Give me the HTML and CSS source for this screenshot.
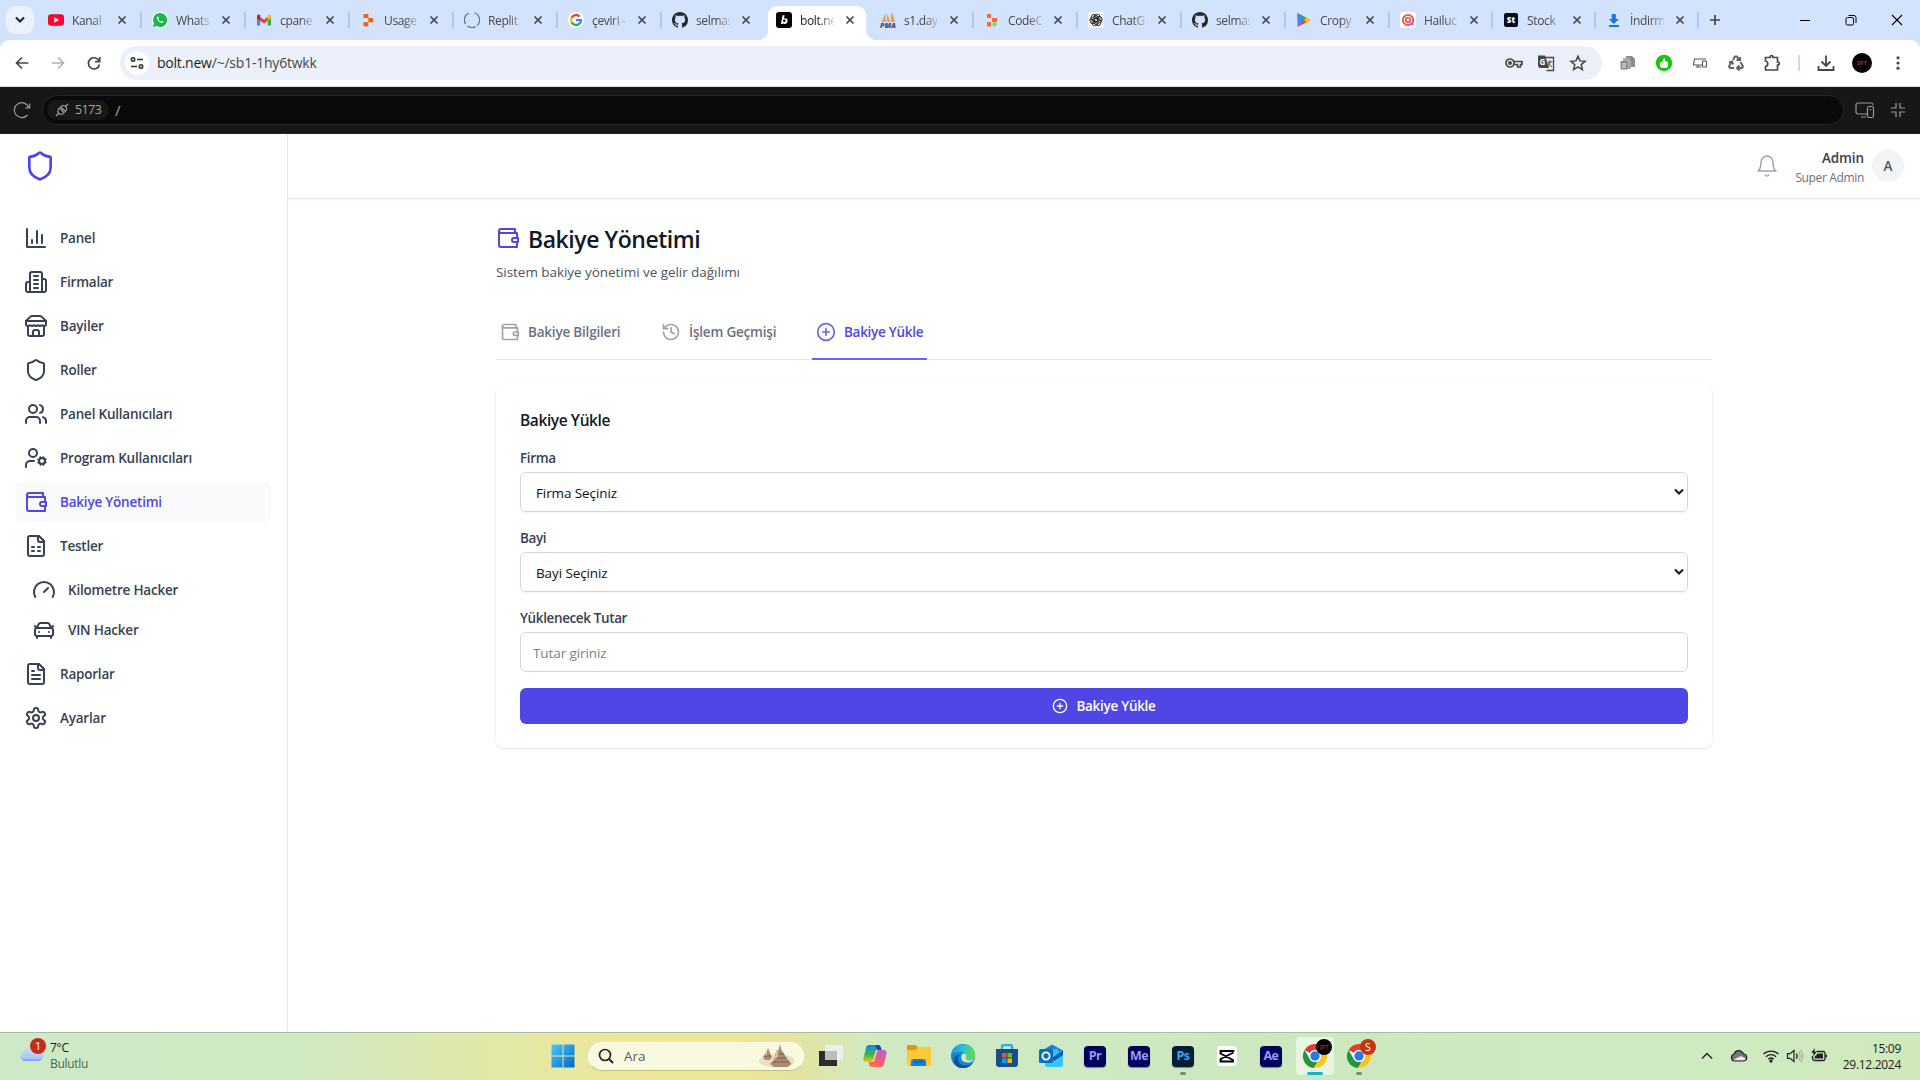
FILE: index.html
```html
<!DOCTYPE html>
<html lang="tr">
<head>
<meta charset="utf-8">
<title>Bakiye Yönetimi</title>
<link rel="stylesheet" href="styles.css">
</head>
<body>
<svg class="defs" aria-hidden="true">
  <symbol id="x" viewBox="0 0 10 10"><path d="M1.5 1.5l7 7M8.5 1.5l-7 7" stroke="#474747" stroke-width="1.7" fill="none"/></symbol>
  <symbol id="github" viewBox="0 0 16 16"><path fill="#24292f" d="M8 0C3.58 0 0 3.58 0 8c0 3.54 2.29 6.53 5.47 7.59.4.07.55-.17.55-.38 0-.19-.01-.82-.01-1.49-2.01.37-2.53-.49-2.69-.94-.09-.23-.48-.94-.82-1.13-.28-.15-.68-.52-.01-.53.63-.01 1.08.58 1.23.82.72 1.21 1.87.87 2.33.66.07-.52.28-.87.51-1.07-1.78-.2-3.64-.89-3.64-3.95 0-.87.31-1.59.82-2.15-.08-.2-.36-1.02.08-2.12 0 0 .67-.21 2.2.82.64-.18 1.32-.27 2-.27s1.36.09 2 .27c1.53-1.04 2.2-.82 2.2-.82.44 1.1.16 1.92.08 2.12.51.56.82 1.27.82 2.15 0 3.07-1.87 3.75-3.65 3.95.29.25.54.73.54 1.48 0 1.07-.01 1.93-.01 2.2 0 .21.15.46.55.38A8.01 8.01 0 0 0 16 8c0-4.42-3.58-8-8-8z"/></symbol>
  <symbol id="shield" viewBox="0 0 24 24"><path d="M20 13c0 5-3.5 7.5-7.66 8.95a1 1 0 0 1-.67-.01C7.5 20.5 4 18 4 13V6a1 1 0 0 1 1-1c2 0 4.500-1.200 6.240-2.720a1.170 1.170 0 0 1 1.520 0C14.510 3.810 17 5 19 5a1 1 0 0 1 1 1z"/></symbol>
  <symbol id="wallet" viewBox="0 0 24 24"><path d="M21 12V7H5a2 2 0 0 1 0-4h14v4"/><path d="M3 5v14a2 2 0 0 0 2 2h16v-5"/><path d="M18 12a2 2 0 0 0 0 4h4v-4Z"/></symbol>
  <symbol id="plus-circle" viewBox="0 0 24 24"><circle cx="12" cy="12" r="10"/><path d="M8 12h8M12 8v8"/></symbol>
  <symbol id="chev" viewBox="0 0 10 8"><path d="M1 1.500l4 4 4-4" fill="none" stroke="#111827" stroke-width="2"/></symbol>
  <symbol id="chrome" viewBox="0 0 24 24">
    <circle cx="12" cy="12" r="12" fill="#fff"/>
    <path d="M1.600 6A12 12 0 0 1 22.400 6H12A6 6 0 0 0 6.800 9z" fill="#e33b2e"/>
    <path d="M1.600 6L6.800 15A6 6 0 0 0 12 18l-2 6A12 12 0 0 1 1.600 6z" fill="#24943f"/>
    <path d="M22.400 6H12a6 6 0 0 1 5.200 9L12 24A12 12 0 0 0 22.400 6z" fill="#fcc31e"/>
    <path d="M6.800 15A6 6 0 0 0 17.200 15L12 24l-2-.1z" fill="#fcc31e"/><path d="M6.800 15A6 6 0 0 0 14.500 17.500L10.700 23.900 7 21z" fill="#24943f"/>
    <circle cx="12" cy="12" r="6" fill="#fff"/><circle cx="12" cy="12" r="4.700" fill="#2e77ea"/>
  </symbol>
</svg>

<header class="tabstrip">
  <button class="tab-search"><svg width="10" height="8" viewBox="0 0 10 8"><path d="M1 1.500l4 4 4-4" fill="none" stroke="#1f1f1f" stroke-width="2"/></svg></button>
  <div class="tabs">
    <div class="tab"><svg class="fav" viewBox="0 0 16 16"><rect y="2.300" width="16" height="11.500" rx="3" fill="#ff0033"/><path d="M6.300 5.300v5.400L11 8z" fill="#fff"/></svg><span>Kanal</span><svg class="close"><use href="#x"/></svg></div>
    <div class="tab"><svg class="fav" viewBox="0 0 16 16"><circle cx="8" cy="8" r="8" fill="#fff"/><path d="M8 1a7 7 0 0 0-6 10.500L1 15l3.600-1A7 7 0 1 0 8 1z" fill="#19b844"/><path d="M5.300 4.500c-1 .8-.6 2.700 1 4.500s3.800 2.600 4.700 1.500c.7-.9 0-1.200-1-1.600-.6-.2-.8.800-1.200.7-1-.4-2-1.400-2.300-2.200 0-.4.800-.6.500-1.300-.4-1-.7-2.100-1.700-1.600z" fill="#fff"/></svg><span>Whats</span><svg class="close"><use href="#x"/></svg></div>
    <div class="tab"><svg class="fav" viewBox="0 0 16 16"><path d="M1 4v9.500h3.200V6z" fill="#4285f4"/><path d="M15 4v9.500h-3.200V6z" fill="#34a853"/><path d="M4.200 4.800L8 7.700l3.800-2.900v3.900L8 11.500 4.200 8.700z" fill="#ea4335"/><path d="M1 4.200C1 2.500 3 2 4.200 3v5.700L1 6.300z" fill="#c5221f"/><path d="M15 4.200C15 2.500 13 2 11.800 3v5.700L15 6.300z" fill="#fbbc04"/></svg><span>cpane</span><svg class="close"><use href="#x"/></svg></div>
    <div class="tab"><svg class="fav" viewBox="0 0 16 16"><path d="M3.500 2h4.800v4H3.500zM8.300 6h4.800v4.300H8.300zM3.500 10.300h4.800v4H3.500z" fill="#f26207"/></svg><span>Usage</span><svg class="close"><use href="#x"/></svg></div>
    <div class="tab"><svg class="fav" viewBox="0 0 16 16"><g fill="none" stroke="#52798f" stroke-width="1.200"><path d="M10.500.8A7.600 7.600 0 0 1 13.200 13.500"/><path d="M5 1A7.600 7.600 0 0 0 1.500 12"/><path d="M3.500 14a7.600 7.600 0 0 0 8 .6"/></g></svg><span>Replit</span><svg class="close"><use href="#x"/></svg></div>
    <div class="tab"><svg class="fav" viewBox="0 0 16 16"><circle cx="8" cy="8" r="8" fill="#fff"/><g fill="none" stroke-width="2.300"><path d="M3.600 5.700A5 5 0 0 1 11.600 4.500" stroke="#ea4335"/><path d="M3.600 10.300a5 5 0 0 1 0-4.600" stroke="#fbbc05"/><path d="M11.400 11.700a5 5 0 0 1-7.800-1.400" stroke="#34a853"/><path d="M8 8.200h5a5 5 0 0 1-1.600 3.500" stroke="#4285f4"/></g></svg><span>çeviri -</span><svg class="close"><use href="#x"/></svg></div>
    <div class="tab nosep"><svg class="fav"><use href="#github"/></svg><span>selmas</span><svg class="close"><use href="#x"/></svg></div>
    <div class="tab active nosep"><svg class="fav" viewBox="0 0 16 16"><rect width="16" height="16" rx="3" fill="#000"/><path d="M6.600 3.300L4.900 12h1.700l.3-.7c2.100 1.700 4.600.2 4.700-2.600.1-2.200-2-3.200-3.600-2l.6-3.400z" fill="#fff"/><circle cx="8.300" cy="8.800" r="1.300" fill="#000"/></svg><span>bolt.ne</span><svg class="close"><use href="#x"/></svg></div>
    <div class="tab"><svg class="fav" viewBox="0 0 16 16"><path d="M5.700 1v9H1.500C3 7.500 4.500 4 5.700 1zM7 2v8h3C9.500 7 8.500 4 7 2zM11 0v10h4C14.500 6 13 3 11 0z" fill="#f29a3a"/><text x="0" y="15.700" font-size="6" font-weight="800" font-style="italic" textLength="16" lengthAdjust="spacingAndGlyphs" fill="#4b4b70">PMA</text></svg><span>s1.day</span><svg class="close"><use href="#x"/></svg></div>
    <div class="tab"><svg class="fav" viewBox="0 0 16 16"><path d="M3 2h4v4H3zM8 6h5v4H8zM3 10h4v4.500H3z" fill="#fb6a21"/><circle cx="10.500" cy="12.300" r="2.200" fill="#71df79"/></svg><span>CodeC</span><svg class="close"><use href="#x"/></svg></div>
    <div class="tab"><svg class="fav" viewBox="0 0 16 16"><rect width="16" height="16" rx="3" fill="#fff"/><g fill="none" stroke="#222" stroke-width=".9"><rect x="6" y="2.200" width="6" height="7.500" rx="2.800"/><rect x="6" y="2.200" width="6" height="7.500" rx="2.800" transform="rotate(60 8 8)"/><rect x="6" y="2.200" width="6" height="7.500" rx="2.800" transform="rotate(120 8 8)"/><rect x="6" y="2.200" width="6" height="7.500" rx="2.800" transform="rotate(180 8 8)"/><rect x="6" y="2.200" width="6" height="7.500" rx="2.800" transform="rotate(240 8 8)"/><rect x="6" y="2.200" width="6" height="7.500" rx="2.800" transform="rotate(300 8 8)"/></g></svg><span>ChatG</span><svg class="close"><use href="#x"/></svg></div>
    <div class="tab"><svg class="fav"><use href="#github"/></svg><span>selmas</span><svg class="close"><use href="#x"/></svg></div>
    <div class="tab"><svg class="fav" viewBox="0 0 16 16"><path d="M1.500 1v7H9z" fill="#34a853"/><path d="M1.500 1L11 6 8 9z" fill="#2da94f"/><path d="M1.500 1v14L8.500 8z" fill="#4285f4"/><path d="M1.500 15L11 10 8.500 7.500z" fill="#ea4335"/><path d="M10.500 5.500L15 8l-4.500 2.500L8 8z" fill="#fbbc04"/></svg><span>Cropy</span><svg class="close"><use href="#x"/></svg></div>
    <div class="tab narrow"><svg class="fav" viewBox="0 0 16 16"><rect width="16" height="16" rx="3" fill="#fff"/><circle cx="8" cy="8" r="5.200" fill="none" stroke="#f4523b" stroke-width="1.800"/><path d="M13 8v4.500H8.500A5 5 0 0 0 13 8z" fill="#e14ec0" stroke="#e14ec0"/><circle cx="8" cy="8" r="2.300" fill="none" stroke="#f0594a" stroke-width="1.700"/></svg><span>Hailuc</span><svg class="close"><use href="#x"/></svg></div>
    <div class="tab narrow"><svg class="fav" viewBox="0 0 16 16"><rect x="1" y="1" width="14" height="14" rx="2" fill="#000b1d"/><text x="8" y="11" font-size="8" font-weight="800" text-anchor="middle" fill="#fff">St</text></svg><span>Stock</span><svg class="close"><use href="#x"/></svg></div>
    <div class="tab narrow"><svg class="fav" viewBox="0 0 16 16"><path d="M5.800 2h4v5H13L7.800 12 2.800 7h3zM3 13h10v2H3z" fill="#1a73e8"/></svg><span>İndirm</span><svg class="close"><use href="#x"/></svg></div>
  </div>
  <svg class="newtab" viewBox="0 0 12 12"><path d="M6 1v10M1 6h10" stroke="#444" stroke-width="1.700"/></svg>
  <div class="wincontrols">
    <svg viewBox="0 0 12 12"><path d="M1 6.500h10" stroke="#000"/></svg>
    <svg viewBox="0 0 12 12" fill="none" stroke="#000"><rect x="1" y="3.500" width="7.500" height="7.500" rx="1.500"/><path d="M3.500 1.500H9a2 2 0 0 1 2 2V9"/></svg>
    <svg viewBox="0 0 12 12"><path d="M1 1l10 10M11 1L1 11" stroke="#000" stroke-width="1.100"/></svg>
  </div>
</header>

<div class="toolbar">
  <div class="navbtns">
    <svg viewBox="0 0 16 16" fill="none" stroke="#474747" stroke-width="1.700"><path d="M14.300 8H2.500M8 2.500L2.500 8 8 13.500"/></svg>
    <svg viewBox="0 0 16 16" fill="none" stroke="#b1b1b1" stroke-width="1.700"><path d="M1.700 8h11.800M8 2.500L13.500 8 8 13.500"/></svg>
    <svg viewBox="0 0 16 16" fill="none" stroke="#474747" stroke-width="1.700"><path d="M13.300 6.500A5.600 5.600 0 1 0 13.500 9.500M13.700 2v4.700H9"/></svg>
  </div>
  <div class="omnibox">
    <span class="siteinfo"><svg width="14" height="14" viewBox="0 0 14 14" fill="none" stroke="#333" stroke-width="1.600"><circle cx="3" cy="3.500" r="1.700"/><path d="M7 3.500h6M1 10.500h6"/><circle cx="11" cy="10.500" r="1.700"/></svg></span>
    <span class="url"><b>bolt.new</b>/~/sb1-1hy6twkk</span>
    <div class="omni-icons">
      <svg viewBox="0 0 18 18" fill="none" stroke="#474747" stroke-width="1.700"><circle cx="5" cy="9" r="4"/><circle cx="5" cy="9" r="1.100" fill="#474747"/><path d="M8.800 7.500H17v3h-1.500V13h-3v-2.500H8.800"/></svg>
      <svg viewBox="0 0 18 18"><path d="M6 3.500h10.500v13H9.500" fill="none" stroke="#474747" stroke-width="1.300"/><path d="M1 1.500h7l4 12.500H2.500L1 12z" fill="#474747"/><text x="2.500" y="10.500" font-size="8" font-weight="700" fill="#fff">G</text><path d="M10.500 8h5M13 6.500V8c-.3 2-1.500 3.500-2.500 4.500M11.500 9c.8 1.800 2 3 3.500 4" stroke="#474747" fill="none"/></svg>
      <svg viewBox="0 0 18 18" fill="none" stroke="#474747" stroke-width="1.500"><path d="M9 2.200l2 4.700 5.100.4-3.900 3.300 1.200 5L9 12.900l-4.400 2.700 1.200-5L1.900 7.300 7 6.900z"/></svg>
    </div>
  </div>
  <div class="ext-icons">
    <svg viewBox="0 0 18 18"><path d="M7 2h6l3 3v8H7z" fill="#8c8c8c"/><path d="M4 4h6l2 3v8H4z" fill="#aaa"/><path d="M1.500 7h7v8.500h-7z" fill="#8c8c8c"/><path d="M3 9h4v5H3z" fill="#bbb"/></svg>
    <svg viewBox="0 0 18 18"><circle cx="9" cy="9" r="8.200" fill="#14c90a"/><path d="M5 8.500h2L9 4c1.500 0 1.500 1.500 1 3.500h3v4.800L12 14H6.500L5 12.500z" fill="#fff"/></svg>
    <svg viewBox="0 0 18 18" fill="none" stroke="#555" stroke-width="1.100"><path d="M11 11H2.500l1-6H15M7 11v2M5 13h5"/><rect x="11.500" y="7" width="4" height="6" rx=".5"/></svg>
    <svg viewBox="0 0 18 18" fill="none" stroke="#5f6368" stroke-width="2"><path d="M6 6l2-3.500h2L12 6M13.500 8l2.500 4.500-1 1.500h-4M7 14H3l-1-1.500L4.500 8M9.500 6H13V3M12.500 11.500L10 14l2.500 2.500M2 8.500L5 7.500l1 3"/></svg>
    <svg viewBox="0 0 18 18" fill="none" stroke="#474747" stroke-width="1.700"><path d="M2.500 3.500H7c0-2.500 3-2.500 3 0h4.500V8c2.500 0 2.500 3 0 3v5h-12v-3.500c3-.5 3-5 0-5.500z"/></svg>
  </div>
  <i class="tb-sep"></i>
  <div class="end-icons">
    <svg viewBox="0 0 18 18" fill="none" stroke="#474747" stroke-width="1.800"><path d="M9 1.500v10M4.500 7.500L9 12l4.500-4.500M1.500 12v4h15v-4"/></svg>
    <svg viewBox="0 0 20 20"><circle cx="10" cy="10" r="10" fill="#000"/><text x="10" y="12" text-anchor="middle" font-size="6" font-weight="700" fill="#d21c1c">SFT</text></svg>
    <svg viewBox="0 0 18 18" fill="#474747"><circle cx="9" cy="3.800" r="1.600"/><circle cx="9" cy="9" r="1.600"/><circle cx="9" cy="14.200" r="1.600"/></svg>
  </div>
</div>

<div class="preview-bar">
  <svg class="pv-reload" viewBox="0 0 18 18" fill="none" stroke="#9a9a9a" stroke-width="1.200"><path d="M15.800 6.500A7.500 7.500 0 1 0 14.500 14M16.700 2.500v4.300h-4.300"/></svg>
  <div class="pv-url">
    <span class="port"><svg width="14" height="14" viewBox="0 0 14 14" fill="none" stroke="#a3a3a3" stroke-width="1.100"><path d="M4 4.500l5.500 5.500M1 13l2.300-2.300M4.300 5l-1.200 1.600a3.200 3.200 0 0 0 4.300 4.300L9 9.700M5.500 3.800l1.600-1a3.200 3.200 0 0 1 4.200 4.300L10 8.800M10 4l3-3M5.500 3.500l5 5"/></svg>5173</span>
    <span class="slash">/</span>
  </div>
  <svg class="pv-dev" viewBox="0 0 20 18" fill="none" stroke="#9a9a9a" stroke-width="1.200"><path d="M12 13H3a2 2 0 0 1-2-2V4a2 2 0 0 1 2-2h13a2 2 0 0 1 2 2M6 16h5"/><rect x="12.500" y="5.500" width="6" height="11" rx="1.500"/><path d="M15.500 8v1.500"/></svg>
  <svg class="pv-shrink" viewBox="0 0 14 14" fill="none" stroke="#9a9a9a" stroke-width="1.200"><path d="M0 5h5V0M9 0v5h5M0 9h5v5M9 14V9h5"/></svg>
</div>

<div class="app">
  <aside class="sidebar">
    <svg class="logo ic"><use href="#shield"/></svg>
    <nav>
      <a class="nav"><svg class="ic" viewBox="0 0 24 24"><path d="M3 3v18h18M18 17V9M13 17V5M8 17v-3"/></svg>Panel</a>
      <a class="nav"><svg class="ic" viewBox="0 0 24 24"><path d="M6 22V4a2 2 0 0 1 2-2h8a2 2 0 0 1 2 2v18Z"/><path d="M6 12H4a2 2 0 0 0-2 2v6a2 2 0 0 0 2 2h2M18 9h2a2 2 0 0 1 2 2v9a2 2 0 0 1-2 2h-2M10 6h4M10 10h4M10 14h4M10 18h4"/></svg>Firmalar</a>
      <a class="nav"><svg class="ic" viewBox="0 0 24 24"><path d="m2 7 4.410-4.410A2 2 0 0 1 7.830 2h8.340a2 2 0 0 1 1.420.59L22 7"/><path d="M4 12v8a2 2 0 0 0 2 2h12a2 2 0 0 0 2-2v-8"/><path d="M15 22v-4a2 2 0 0 0-2-2h-2a2 2 0 0 0-2 2v4M2 7h20"/><path d="M22 7v3a2 2 0 0 1-2 2a2.700 2.700 0 0 1-1.590-.63.700.700 0 0 0-.82 0A2.700 2.700 0 0 1 16 12a2.700 2.700 0 0 1-1.590-.63.700.700 0 0 0-.82 0A2.700 2.700 0 0 1 12 12a2.700 2.700 0 0 1-1.590-.63.700.700 0 0 0-.82 0A2.700 2.700 0 0 1 8 12a2.700 2.700 0 0 1-1.590-.63.700.700 0 0 0-.82 0A2.700 2.700 0 0 1 4 12a2 2 0 0 1-2-2V7"/></svg>Bayiler</a>
      <a class="nav"><svg class="ic"><use href="#shield"/></svg>Roller</a>
      <a class="nav"><svg class="ic" viewBox="0 0 24 24"><path d="M16 21v-2a4 4 0 0 0-4-4H6a4 4 0 0 0-4 4v2"/><circle cx="9" cy="7" r="4"/><path d="M22 21v-2a4 4 0 0 0-3-3.870M16 3.130a4 4 0 0 1 0 7.750"/></svg>Panel Kullanıcıları</a>
      <a class="nav"><svg class="ic" viewBox="0 0 24 24"><circle cx="18" cy="15" r="3"/><circle cx="9" cy="7" r="4"/><path d="M10 15H6a4 4 0 0 0-4 4v2M21.700 16.400l-.9-.3M15.200 13.900l-.9-.3M16.600 18.700l.3-.9M19.100 12.200l.3-.9M19.600 18.700l-.4-1M16.800 12.300l-.4-1M14.300 16.600l1-.4M20.700 13.800l1-.4"/></svg>Program Kullanıcıları</a>
      <a class="nav current"><svg class="ic"><use href="#wallet"/></svg>Bakiye Yönetimi</a>
      <div class="group">
        <a class="nav"><svg class="ic" viewBox="0 0 24 24"><path d="M15 2H6a2 2 0 0 0-2 2v16a2 2 0 0 0 2 2h12a2 2 0 0 0 2-2V7Z"/><path d="M14 2v4a2 2 0 0 0 2 2h4M8 13h2M14 13h2M8 17h2M14 17h2"/></svg>Testler</a>
        <div class="sub">
          <a class="nav"><svg class="ic" viewBox="0 0 24 24"><path d="m12 14 4-4M3.340 19a10 10 0 1 1 17.320 0"/></svg>Kilometre Hacker</a>
          <a class="nav"><svg class="ic" viewBox="0 0 24 24"><path d="m21 8-2 2-1.500-3.700A2 2 0 0 0 15.646 5H8.400a2 2 0 0 0-1.903 1.257L5 10 3 8M7 14h.01M17 14h.01"/><rect width="18" height="8" x="3" y="10" rx="2"/><path d="M5 18v2M19 18v2"/></svg>VIN Hacker</a>
        </div>
      </div>
      <a class="nav"><svg class="ic" viewBox="0 0 24 24"><path d="M15 2H6a2 2 0 0 0-2 2v16a2 2 0 0 0 2 2h12a2 2 0 0 0 2-2V7Z"/><path d="M14 2v4a2 2 0 0 0 2 2h4M10 9H8M16 13H8M16 17H8"/></svg>Raporlar</a>
      <a class="nav"><svg class="ic" viewBox="0 0 24 24"><path d="M12.220 2h-.44a2 2 0 0 0-2 2v.18a2 2 0 0 1-1 1.730l-.43.25a2 2 0 0 1-2 0l-.15-.08a2 2 0 0 0-2.730.73l-.22.38a2 2 0 0 0 .73 2.730l.15.1a2 2 0 0 1 1 1.720v.51a2 2 0 0 1-1 1.740l-.15.09a2 2 0 0 0-.73 2.730l.22.38a2 2 0 0 0 2.730.73l.15-.08a2 2 0 0 1 2 0l.43.25a2 2 0 0 1 1 1.730V20a2 2 0 0 0 2 2h.44a2 2 0 0 0 2-2v-.18a2 2 0 0 1 1-1.730l.43-.25a2 2 0 0 1 2 0l.15.08a2 2 0 0 0 2.730-.73l.22-.39a2 2 0 0 0-.73-2.730l-.15-.08a2 2 0 0 1-1-1.740v-.5a2 2 0 0 1 1-1.740l.15-.09a2 2 0 0 0 .73-2.730l-.22-.38a2 2 0 0 0-2.730-.73l-.15.08a2 2 0 0 1-2 0l-.43-.25a2 2 0 0 1-1-1.730V4a2 2 0 0 0-2-2z"/><circle cx="12" cy="12" r="3"/></svg>Ayarlar</a>
    </nav>
  </aside>
  <div class="content">
    <div class="topbar">
      <svg class="ic bell" viewBox="0 0 24 24"><path d="M6 8a6 6 0 0 1 12 0c0 7 3 9 3 9H3s3-2 3-9M10.300 21a1.940 1.940 0 0 0 3.400 0"/></svg>
      <div class="who"><strong>Admin</strong><span>Super Admin</span></div>
      <div class="avatar">A</div>
    </div>
    <main>
      <h1><svg class="ic"><use href="#wallet"/></svg><span>Bakiye Yönetimi</span></h1>
      <p class="lead">Sistem bakiye yönetimi ve gelir dağılımı</p>
      <div class="subtabs">
        <a><svg class="ic"><use href="#wallet"/></svg><span class="t1">Bakiye Bilgileri</span></a>
        <a><svg class="ic" viewBox="0 0 24 24"><path d="M3 12a9 9 0 1 0 9-9 9.750 9.750 0 0 0-6.740 2.740L3 8"/><path d="M3 3v5h5M12 7v5l4 2"/></svg><span class="t2">İşlem Geçmişi</span></a>
        <a class="on"><svg class="ic"><use href="#plus-circle"/></svg><span class="t3">Bakiye Yükle</span></a>
      </div>
      <section class="card">
        <h2>Bakiye Yükle</h2>
        <label>Firma</label>
        <div class="field select"><span>Firma Seçiniz</span><svg><use href="#chev"/></svg></div>
        <label>Bayi</label>
        <div class="field select"><span>Bayi Seçiniz</span><svg><use href="#chev"/></svg></div>
        <label>Yüklenecek Tutar</label>
        <div class="field ph"><span>Tutar giriniz</span></div>
        <button class="submit"><svg class="ic"><use href="#plus-circle"/></svg><span>Bakiye Yükle</span></button>
      </section>
    </main>
  </div>
</div>

<footer class="taskbar">
  <div class="weather">
    <svg width="28" height="26" viewBox="0 0 28 26"><defs><linearGradient id="cl" x1="0" y1="0" x2="0" y2="1"><stop offset="0" stop-color="#cfe0fb"/><stop offset=".8" stop-color="#a9c6f5"/><stop offset="1" stop-color="#6d9cf0"/></linearGradient></defs><path d="M5 23a5 5 0 0 1 0-9.500C7 9 13 7 17 11c4-1 7 2 7 6s-2 6-5 6z" fill="url(#cl)"/><circle cx="19" cy="8" r="8" fill="#c42b1c"/><text x="19" y="12" font-size="11.500" text-anchor="middle" fill="#fff">1</text></svg>
    <div><span>7°C</span><span class="dim">Bulutlu</span></div>
  </div>
  <div class="dock">
    <span class="start"><svg width="24" height="24" viewBox="0 0 24 24"><defs><linearGradient id="wn" x1="0" y1="0" x2="1" y2="1"><stop offset="0" stop-color="#4cc9f8"/><stop offset="1" stop-color="#0067c8"/></linearGradient></defs><path d="M.5.500h11v11H.5zM12.500.500h11v11h-11zM.5 12.500h11v11H.5zM12.500 12.500h11v11h-11z" fill="url(#wn)"/></svg></span>
    <div class="search">
      <svg width="16" height="16" viewBox="0 0 16 16" fill="none" stroke="#222" stroke-width="1.700"><circle cx="7" cy="7" r="5.500"/><path d="M11 11l4 4" stroke-width="2"/></svg>
      <span>Ara</span>
      <svg class="castle" width="40" height="26" viewBox="0 0 40 26"><ellipse cx="20" cy="18" rx="18" ry="6.500" fill="#e9dfc4"/><path d="M11 5l2 5 2 4-2 3H8l-2-3 3-4zM23 1l1.500 6 4 6 2 3 4 5-4 3H17l-4-3 4-4 2-7 3-4z" fill="#ab8b72"/><path d="M18 11h9M17 15h12M15 19h17M7 13h7" stroke="#7d604b"/><path d="M20 7l-2 9 3-3zM10 8l-1 5" stroke="#d9bf9f" fill="#d9bf9f"/></svg>
    </div>
    <span class="slot"><svg width="26" height="24" viewBox="0 0 26 24"><path d="M1 7h18v15H1z" fill="#2c2c2c"/><path d="M7 1h18v15H7z" fill="#eee"/><path d="M7 7h12v9H7z" fill="#bcbcbc"/></svg></span>
    <span class="slot"><svg width="26" height="24" viewBox="0 0 26 24"><defs><linearGradient id="ca" x1="0" y1="0" x2="0" y2="1"><stop offset="0" stop-color="#1684ea"/><stop offset=".55" stop-color="#39b54f"/><stop offset="1" stop-color="#f1c614"/></linearGradient><linearGradient id="cb" x1="1" y1="0" x2="0" y2="1"><stop offset="0" stop-color="#b45bf1"/><stop offset=".5" stop-color="#f3597d"/><stop offset="1" stop-color="#fb7a3a"/></linearGradient></defs><path d="M7 1h9c2 0 3 2 3.500 5h-4c-2 0-2 1-2.500 3l-1.500 6c-.6 2-1 3-3 3H4c-3 0-3-3-2-6l2-8c.6-2 1-3 3-3z" fill="url(#ca)"/><path d="M13 1h3c2 0 3 2 3.500 5h-4z" fill="#1247b8"/><path d="M19 23h-9c-2 0-3-2-3.500-5H10c2 0 2.500-1 3-3l1.500-6c.6-2 1-3 3-3H22c3 0 3 3 2 6l-2 8c-.6 2-1 3-3 3z" fill="url(#cb)"/></svg></span>
    <span class="slot"><svg width="26" height="24" viewBox="0 0 26 24"><path d="M1 2c0-.6.400-1 1-1h8l2 3-2 2H1z" fill="#d99a0b"/><path d="M1 6h9l2-3h13v18a1 1 0 0 1-1 1H2a1 1 0 0 1-1-1z" fill="#fdc93b"/><path d="M5 22v-4a3 3 0 0 1 3-3h9a3 3 0 0 1 3 3v4z" fill="#1480dc"/><path d="M8.500 18h8" stroke="#0b4f9c"/></svg></span>
    <span class="slot"><svg width="24" height="24" viewBox="0 0 24 24"><defs><linearGradient id="eg" x1="0" y1=".2" x2="1" y2=".4"><stop offset="0" stop-color="#1995dc"/><stop offset=".5" stop-color="#2bc3d2"/><stop offset="1" stop-color="#62dd49"/></linearGradient></defs><circle cx="12" cy="12" r="12" fill="#1585d6"/><path d="M.2 10C2-3 24-3 24 11c0 4-4 6-8 5-3-1-1-2-1-4 0-3-4-5-7-4-4 0-7 1-7.800 2z" fill="url(#eg)"/><path d="M8.500 10.500c-4 4-1 11 6 11 3 0 6-1 7.500-3C18 26 6 26 3 19c-1-4 1-8 5.500-8.500z" fill="#124f9d"/><path d="M11 10c-2 3-1 8 5 8.500 2 .2 4-.4 6-1.500l1.500-4c-1 3-4 4-7 3-3-1-1-2-1-4s-2-3-4.500-2z" fill="#d0e9c2"/></svg></span>
    <span class="slot"><svg width="24" height="24" viewBox="0 0 24 24"><path d="M7 6V2.500A1.500 1.500 0 0 1 8.500 1h7A1.500 1.500 0 0 1 17 2.500V6" fill="none" stroke="#25b3ee" stroke-width="2.300"/><path d="M1 5h22v15a3 3 0 0 1-3 3H4a3 3 0 0 1-3-3z" fill="#164f88"/><path d="M7 9h4.500v4.500H7z" fill="#f25022"/><path d="M12.500 9H17v4.500h-4.500z" fill="#7fba00"/><path d="M7 14.500h4.500V19H7z" fill="#00a4ef"/><path d="M12.500 14.500H17V19h-4.500z" fill="#ffb900"/></svg></span>
    <span class="slot"><svg width="24" height="24" viewBox="0 0 24 24"><path d="M4 6l9-5.500L23 6v5H4z" fill="#1683d8"/><path d="M8 5h11v10H8z" fill="#38b9f1"/><path d="M6 13l17-7c.6 0 1 .4 1 1v14a2 2 0 0 1-2 2H8a2 2 0 0 1-2-2z" fill="#36c5f4"/><path d="M13 14l11-8v5l-9 6z" fill="#0b5cad"/><rect y="5" width="14" height="14" rx="1.500" fill="#0f6cbd"/><circle cx="7" cy="12" r="3.600" fill="none" stroke="#fff" stroke-width="1.800"/></svg></span>
    <span class="slot"><b class="adobe">Pr</b></span>
    <span class="slot"><b class="adobe">Me</b></span>
    <span class="slot run"><b class="adobe ps">Ps</b></span>
    <span class="slot"><svg width="22" height="22" viewBox="0 0 22 22"><rect x="1" y="1" width="20" height="20" rx="4" fill="#fff"/><path d="M17.500 6.500V6H4.500v2.500L17 15v1.500H4.500V14L17.500 7.500M5 6v3M5 16v-2.500" fill="none" stroke="#000" stroke-width="1.800"/></svg></span>
    <span class="slot"><b class="adobe">Ae</b></span>
    <span class="slot focus"><svg width="38" height="38" viewBox="0 0 38 38"><svg x="7" y="7" width="24" height="24"><use href="#chrome"/></svg><circle cx="28" cy="10" r="8" fill="#000"/><text x="28" y="12" font-size="5" font-weight="700" text-anchor="middle" fill="#c71d1d">SFT</text></svg></span>
    <span class="slot run"><svg width="38" height="38" viewBox="0 0 38 38"><svg x="7" y="7" width="24" height="24"><use href="#chrome"/></svg><circle cx="28" cy="10" r="8" fill="#c1350f"/><text x="28" y="14" font-size="10.500" text-anchor="middle" fill="#fff">S</text></svg></span>
  </div>
  <div class="tray">
    <svg viewBox="0 0 18 18" fill="none" stroke="#222" stroke-width="1.400"><path d="M4 11.500l5-5 5 5"/></svg>
    <svg viewBox="0 0 18 18"><path d="M4.500 14A3.600 3.600 0 0 1 4 7C5.500 3 11 2 13.500 7c4 0 4.500 6.500 0 7z" fill="#777" stroke="#222" stroke-width="1.200"/><path d="M3 13l8-4 4.500 2.500c0 1-1 1.800-2 1.800h-9z" fill="#ece7ef"/></svg>
    <svg viewBox="0 0 18 18" fill="none" stroke="#222" stroke-width="1.300"><path d="M1.500 7a11 11 0 0 1 15 0M4 9.700a7.200 7.200 0 0 1 10 0M6.300 12.200a4 4 0 0 1 5.400 0"/><circle cx="9" cy="14" r="1" fill="#222"/></svg>
    <svg viewBox="0 0 18 18" fill="none" stroke="#222" stroke-width="1.200"><path d="M1.500 6.700h2.500L8 3.500v11l-4-3.200H1.500z"/><path d="M10.300 6.500a4 4 0 0 1 0 5"/><path d="M12.500 4.700a6 6 0 0 1 0 8.600M14.500 3a9 9 0 0 1 0 12" stroke="#9db296"/></svg>
    <svg viewBox="0 0 18 18"><path d="M6.500 4.500H13a2 2 0 0 1 2 2v5a2 2 0 0 1-2 2H4.500a2 2 0 0 1-2-2V9" fill="none" stroke="#222" stroke-width="1.300"/><path d="M7.500 6.500H13v5H4.500V10zM15.500 7.500H17v3h-1.500z" fill="#222"/><path d="M4.800 1.200L1.200 5.800h2.500L3 9.500l3.800-4.700H4.500z" fill="#111"/></svg>
    <div class="clock"><span>15:09</span><span>29.12.2024</span></div>
  </div>
</footer>
</body>
</html>
```
FILE: styles.css
```css
* { box-sizing: border-box; }
html, body { margin: 0; height: 100%; }
body {
  width: 1920px; height: 1080px; overflow: hidden;
  display: flex; flex-direction: column;
  font-family: "Open Sans", "Noto Sans", sans-serif;
  font-size: 13.500px; line-height: 20px; color: #374151; background: #fff;
}
svg { display: block; flex: none; }
button { font: inherit; border: 0; padding: 0; }
.defs { position: absolute; width: 0; height: 0; }
.ic { width: 24px; height: 24px; fill: none; stroke: currentColor; stroke-width: 2; stroke-linecap: round; stroke-linejoin: round; }

/* browser tabs */
.tabstrip { height: 40px; flex: none; background: #d3e2fd; display: flex; align-items: center; padding-left: 6px; }
.tab-search { width: 28px; height: 28px; margin-right: 3px; border-radius: 9px; background: #ebf1fd; display: grid; place-items: center; }
.tabs { width: 1661px; height: 40px; display: flex; }
.tab { flex: none; width: 104px; position: relative; display: flex; align-items: center; padding-left: 11px; color: #474747; font-size: 12px; }
.tab.narrow { width: 103px; }
.tab::after { content: ""; position: absolute; right: -1px; top: 12px; width: 2px; height: 16px; background: #a8c7fa; }
.tab.nosep::after { display: none; }
.fav { width: 16px; height: 16px; margin-right: 8px; }
.tab span { width: 34px; padding-top: 1px; white-space: nowrap; letter-spacing: -.35px; -webkit-mask-image: linear-gradient(90deg, #000 60%, rgba(0,0,0,.15)); mask-image: linear-gradient(90deg, #000 60%, rgba(0,0,0,.15)); }
.close { width: 10px; height: 10px; margin-left: 11px; }
.tab.active { color: #1f1f1f; isolation: isolate; }
.tab.active::before {
  content: ""; position: absolute; z-index: -1; left: 3px; right: 3px; top: 6px; bottom: 0;
  background: #fff; border-radius: 9px 9px 0 0;
}
.tab.active::after {
  display: block; z-index: -1; left: -8px; right: -8px; top: auto; bottom: 0; width: auto; height: 11px;
  background: radial-gradient(circle at 0 0, transparent 11px, #fff 11.5px) left / 11px 11px no-repeat, radial-gradient(circle at 100% 0, transparent 11px, #fff 11.5px) right / 11px 11px no-repeat;
}
.newtab { width: 12px; height: 12px; margin-left: 11px; }
.wincontrols { margin-left: auto; margin-right: 17px; display: flex; gap: 34px; }
.wincontrols svg { width: 12px; height: 12px; }

/* address toolbar */
.toolbar { height: 47px; flex: none; background: linear-gradient(#d3e2fd, #d3e2fd) top / 100% 8px no-repeat; display: flex; align-items: center; position: relative; isolation: isolate; border-bottom: 1px solid #dadce0; }
.toolbar::before { content: ""; position: absolute; inset: 0; z-index: -1; background: #fff; border-radius: 9px 9px 0 0; }
.navbtns { width: 120px; padding-left: 14px; display: flex; gap: 20px; }
.navbtns svg { width: 16px; height: 16px; }
.omnibox { width: 1482px; height: 34px; border-radius: 17px; background: #ecf0fa; display: flex; align-items: center; padding: 0 15px 0 5px; }
.siteinfo { width: 24px; height: 24px; border-radius: 50%; background: #fff; display: grid; place-items: center; margin-right: 8px; }
.url { color: #474747; font-size: 14px; letter-spacing: -.22px; }
.url b { font-weight: 400; color: #1f1f1f; }
.omni-icons { margin-left: auto; display: flex; gap: 14px; }
.omni-icons svg, .ext-icons svg, .end-icons svg { width: 18px; height: 18px; }
.ext-icons { display: flex; gap: 18px; margin-left: 17px; }
.tb-sep { width: 2px; height: 16px; background: #c8dcfb; margin: 0 17px 0 17px; }
.end-icons { display: flex; align-items: center; gap: 17px; }
.end-icons svg:nth-child(2) { width: 20px; height: 20px; }

/* preview bar */
.preview-bar { height: 47px; flex: none; background: #171717; border-bottom: 1px solid #262626; display: flex; align-items: center; padding-left: 13px; }
.pv-reload { width: 18px; height: 18px; }
.pv-url { width: 1802px; height: 30px; margin-left: 11px; border: 1px solid #262626; border-radius: 15px; background: #0a0a0a; display: flex; align-items: center; padding-left: 4px; color: #a3a3a3; }
.port { width: 62px; height: 20px; border-radius: 10px; background: #171717; display: flex; align-items: center; padding-left: 8px; gap: 6px; font-size: 12.500px; letter-spacing: -.6px; }
.slash { margin-left: 6px; font-size: 15px; }
.pv-dev { width: 20px; height: 18px; margin-left: 11px; }
.pv-shrink { width: 14px; height: 14px; margin-left: 16px; }

/* application */
.app { flex: 1; min-height: 0; display: flex; }
.sidebar { width: 288px; border-right: 1px solid #e5e7eb; padding: 16px; }
.logo { width: 32px; height: 32px; margin-left: 8px; color: #4f46e5; }
nav { margin-top: 36px; display: flex; flex-direction: column; gap: 4px; }
.nav { height: 40px; padding: 0 8px; display: flex; align-items: center; gap: 12px; border-radius: 6px; font-weight: 600; letter-spacing: -.21px; white-space: nowrap; }
.nav.current { color: #4f46e5; background: #f9fafb; }
.sub { margin-top: 4px; padding-left: 8px; }
.content { flex: 1; display: flex; flex-direction: column; }
.topbar { height: 65px; border-bottom: 1px solid #e5e7eb; box-shadow: 0 1px 2px rgba(0,0,0,.05); display: flex; align-items: center; justify-content: flex-end; padding-right: 16px; }
.bell { color: #9ca3af; stroke-width: 1.500; }
.who { width: 85px; padding-top: 3px; display: flex; flex-direction: column; align-items: flex-end; line-height: 19px; }
.who strong { font-weight: 600; letter-spacing: -.1px; }
.who span { font-size: 12px; color: #6b7280; letter-spacing: -.35px; white-space: nowrap; }
.avatar { width: 32px; height: 32px; margin-left: 8px; border-radius: 50%; background: #f3f4f6; display: grid; place-items: center; color: #4b5563; font-weight: 600; }
main { width: 1216px; margin: 24px 0 0 208px; }
h1 { margin: 0; height: 32px; display: flex; align-items: center; gap: 8px; font-size: 23px; font-weight: 600; color: #111827; letter-spacing: -.45px; }
h1 .ic { color: #4f46e5; margin-top: -2px; }
.lead { margin: 7px 0 0; color: #4b5563; letter-spacing: -.05px; }
.subtabs { margin-top: 24px; height: 54px; border-bottom: 1px solid #e5e7eb; display: flex; gap: 32px; }
.subtabs a { height: 54px; padding: 0 4px 2px; display: flex; align-items: center; gap: 8px; color: #6b7280; font-weight: 600; letter-spacing: -.2px; white-space: nowrap; }
.subtabs .ic { width: 20px; height: 20px; color: #9ca3af; }
.subtabs .t1 { width: 93px; }
.subtabs .t2 { width: 87px; }
.subtabs .t3 { width: 79px; letter-spacing: -.28px; }
.subtabs a.on { color: #4f46e5; border-bottom: 2px solid #6366f1; padding-bottom: 0; }
.subtabs a.on .ic { color: #6366f1; }
.card { margin-top: 24px; padding: 24px; height: 364px; border-radius: 8px; box-shadow: 0 1px 3px rgba(0,0,0,.1), 0 1px 2px -1px rgba(0,0,0,.1); display: flex; flex-direction: column; }
h2 { margin: 0 0 16px; font-size: 15.500px; line-height: 24px; font-weight: 600; color: #111827; letter-spacing: -.4px; }
label { line-height: 20px; margin-bottom: 4px; font-weight: 600; letter-spacing: -.38px; }
.field { height: 40px; margin-bottom: 16px; flex: none; border: 1px solid #d1d5db; border-radius: 6px; display: flex; align-items: center; padding: 0 12px; letter-spacing: -.1px; }
.field span { padding-top: 2px; }
.field.select { justify-content: space-between; color: #111; padding: 0 3px 0 15px; box-shadow: 0 1px 2px rgba(0,0,0,.05); }
.field svg { width: 10px; height: 8px; }
.ph { color: #7b818c; }
.submit { height: 36px; border-radius: 6px; background: #4f46e5; color: #fff; display: flex; align-items: center; justify-content: center; gap: 8px; font-weight: 600; letter-spacing: -.28px; }
.submit .ic { width: 16px; height: 16px; }

/* taskbar */
.taskbar { height: 48px; flex: none; border-top: 1px solid #a9bba2; background: linear-gradient(90deg, #cde9c8 0, #cfe9c2 300px, #e0e8a9 480px, #ebe79b 600px, #ebe798 740px, #e3e3a2 800px, #d3eabd 860px, #cfe9c6 960px, #cde8be 1300px, #cfe9c4 1600px, #d0e9bb 1920px); display: flex; font-size: 12px; line-height: 16px; color: #1b1b1b; }
.weather { width: 540px; display: flex; padding: 5px 0 0 19px; }
.weather div { margin: 2px 0 0 3px; display: flex; flex-direction: column; letter-spacing: -.3px; }
.weather .dim { color: #52634e; }
.dock { display: flex; align-items: center; height: 46px; }
.start { width: 44px; display: grid; place-items: center; padding-left: 1px; }
.search { width: 218px; height: 30px; margin: 0 4px 0 3px; border-radius: 15px; background: #f9f9df; border: 1px solid #e5e6be; border-bottom-color: #bcbf88; display: flex; align-items: center; padding: 0 7px 0 10px; font-size: 13.500px; color: #5c5c50; }
.search span { margin-left: 10px; }
.castle { margin-left: auto; }
.slot { width: 44px; height: 38px; display: grid; place-items: center; position: relative; }
.adobe { width: 22px; height: 21px; border-radius: 4px; background: #00005b; color: #9999ff; font-size: 12.500px; line-height: 20px; text-align: center; letter-spacing: -.5px; box-shadow: 0 1px 1px rgba(0,0,0,.4); }
.adobe.ps { background: #001e36; color: #31a8ff; }
.focus::before { content: ""; position: absolute; inset: 0 3px; border-radius: 4px; background: rgba(255,255,255,.55); }
.focus svg { position: relative; }
.focus::after, .run::after { content: ""; position: absolute; bottom: 0; left: 19px; width: 6px; height: 3px; border-radius: 2px; background: #7b8d74; }
.focus::after { left: 14px; width: 16px; background: #12b5c3; }
.tray { margin-left: auto; display: flex; align-items: center; height: 46px; padding-right: 19px; }
.tray svg { width: 18px; height: 18px; }
.tray svg:nth-child(1), .tray svg:nth-child(2) { margin-right: 14px; }
.tray svg:nth-child(3), .tray svg:nth-child(4) { margin-right: 6px; }
.clock { width: 73px; padding-top: 1px; display: flex; flex-direction: column; align-items: flex-end; letter-spacing: -.3px; }
```
